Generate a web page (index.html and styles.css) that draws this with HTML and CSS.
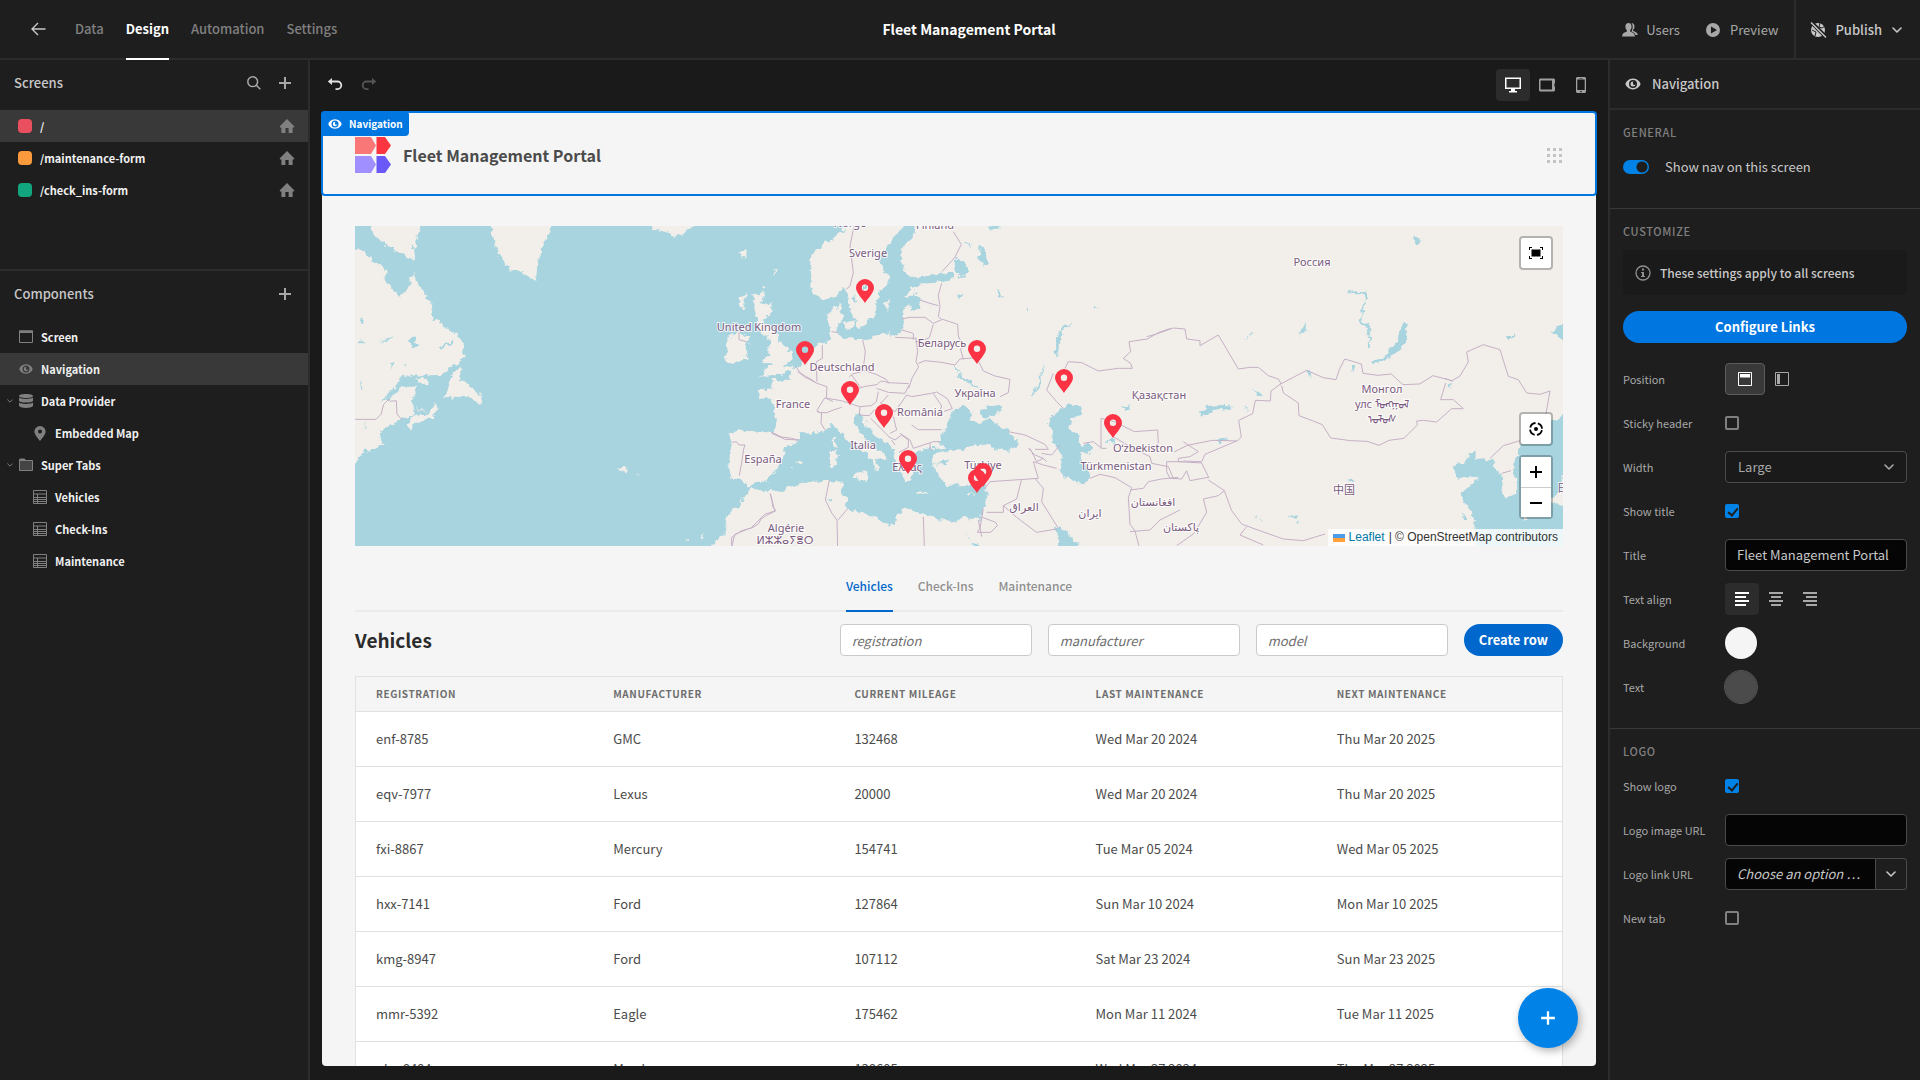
FILE: index.html
```html
<!DOCTYPE html>
<html lang="en">
<head>
<meta charset="utf-8">
<meta name="viewport" content="width=device-width, initial-scale=1">
<title>Fleet Management Portal</title>
<link rel="stylesheet" href="styles.css">
</head>
<body>
<svg class="defs" aria-hidden="true">
  <symbol id="i-plus" viewBox="0 0 14 14"><path d="M6 1h2v5h5v2H8v5H6V8H1V6h5z"/></symbol>
  <symbol id="i-home" viewBox="0 0 16 16"><path d="M8 1 .6 8.600l.6.9H2.400V15h4v-5h3.200v5h4V9.500h1.200l.6-.9z"/></symbol>
  <symbol id="i-eye" viewBox="0 0 16 12"><path fill-rule="evenodd" d="M8 .6C3.800.6.5 4.200.5 6s3.300 5.400 7.500 5.400S15.500 7.800 15.500 6 12.200.6 8 .6zM8 10a4 4 0 1 1 0-8 4 4 0 0 1 0 8zM8 3.500A2.500 2.500 0 1 0 10.500 6 1.300 1.300 0 0 1 8 5.200 1.300 1.300 0 0 1 8.600 3.600z"/></symbol>
  <symbol id="i-chev" viewBox="0 0 10 6"><path d="m1 1 4 4 4-4" fill="none" stroke="currentColor" stroke-width="1.600" stroke-linecap="round" stroke-linejoin="round"/></symbol>
  <symbol id="i-table" viewBox="0 0 14 14"><path d="M.5.5h13v13H.5zM.5 4h13M.5 7.500h13M.5 9.500h13M.5 11.500h13M4.500 4v9.500" fill="none" stroke="currentColor"/></symbol>
  <symbol id="i-undo" viewBox="0 0 16 14"><path d="M5 0v2.600h5.500a4.700 4.700 0 0 1 0 9.400H8.500v-1.800h2a2.900 2.900 0 0 0 0-5.800H5V7L.8 3.500z"/></symbol>
  <symbol id="pin" viewBox="0 0 18 24" overflow="visible"><path fill-rule="evenodd" d="M9 24C7 20.500 0 13.500 0 9a9 9 0 0 1 18 0c0 4.500-7 11.500-9 15zM9 5.500a3.200 3.200 0 1 0 0 6.400 3.200 3.200 0 0 0 0-6.400z"/></symbol>
</svg>

<header class="topbar">
  <nav class="topnav">
    <a class="back" href="#" aria-label="Back"><svg width="15" height="14" viewBox="0 0 15 14"><path d="M14.500 7H1M7 1 1 7l6 6" fill="none" stroke="currentColor" stroke-width="1.400"/></svg></a>
    <a href="#">Data</a>
    <a href="#" class="active">Design</a>
    <a href="#">Automation</a>
    <a href="#">Settings</a>
  </nav>
  <h1 class="app-title">Fleet Management Portal</h1>
  <div class="topactions">
    <button class="act"><svg width="16" height="14" viewBox="0 0 16 14"><path d="M6.500 0C4.500 0 3.400 1.500 3.400 3.600c0 1.500.6 2.900 1.500 3.800v1.200C2.500 9.300.2 10.500 0 13.500h13c-.2-3-2.500-4.200-4.900-4.900V7.400c.9-.9 1.500-2.300 1.500-3.800C9.600 1.500 8.500 0 6.500 0z"/><path d="M9.300.1c2 .1 3.200 1.400 3.200 3.500 0 1.500-.6 2.700-1.400 3.500v1c2.500.6 4.500 2 4.700 3.900l-2.200-.1c-.8-1.700-2.400-2.700-4.200-3.300 1.500-2.500 2-6.500-.1-8.500z"/></svg>Users</button>
    <button class="act"><svg width="14" height="14" viewBox="0 0 14 14"><path fill-rule="evenodd" d="M7 0a7 7 0 1 0 0 14A7 7 0 0 0 7 0zM5 3.500 11 7l-6 3.500z"/></svg>Preview</button>
    <button class="act publish"><svg width="17" height="16" viewBox="0 0 17 16"><path d="M8 1a7 7 0 1 0 0 14A7 7 0 0 0 8 1z"/><path d="m3 3 4 1 1 3M10 1l-1 4 3 1 3-2M5 14l1-4-4-2" fill="none" stroke="#1e1e1e"/><path d="m1 0 15 15" stroke="#1e1e1e" stroke-width="4"/><path d="m1 .5 15 15" stroke="currentColor" stroke-width="1.400"/></svg>Publish<svg class="chev" width="10" height="6"><use href="#i-chev"/></svg></button>
  </div>
</header>

<div class="workspace">
  <aside class="left">
    <section class="screens">
      <div class="panel-head"><h2>Screens</h2>
        <button aria-label="Search"><svg width="14" height="14" viewBox="0 0 14 14"><path d="M5.700.8a4.900 4.900 0 1 1 0 9.800 4.900 4.900 0 0 1 0-9.800zM9.300 9.300l4 4" fill="none" stroke="currentColor" stroke-width="1.500"/></svg></button>
        <button aria-label="Add screen"><svg width="14" height="14"><use href="#i-plus"/></svg></button></div>
      <ul class="tree">
        <li class="selected"><i class="swatch red"></i><a href="#">/</a><svg class="home" width="16" height="16"><use href="#i-home"/></svg></li>
        <li><i class="swatch orange"></i><a href="#">/maintenance-form</a><svg class="home" width="16" height="16"><use href="#i-home"/></svg></li>
        <li><i class="swatch green"></i><a href="#">/check_ins-form</a><svg class="home" width="16" height="16"><use href="#i-home"/></svg></li>
      </ul>
    </section>
    <section class="components">
      <div class="panel-head"><h2>Components</h2>
        <button aria-label="Add component"><svg width="14" height="14"><use href="#i-plus"/></svg></button></div>
      <ul class="tree">
        <li><svg width="14" height="14" viewBox="0 0 14 14"><path d="M.5 1h13v11.500H.5z" fill="none" stroke="currentColor"/><path d="M0 .5h14V3H0z"/></svg><a href="#">Screen</a></li>
        <li class="selected"><svg width="14" height="14"><use href="#i-eye"/></svg><a href="#">Navigation</a></li>
        <li class="open"><svg class="twist" width="6" height="4"><use href="#i-chev"/></svg><svg width="14" height="14" viewBox="0 0 14 14"><path d="M7 0c4 0 7 .8 7 2s-3 2-7 2-7-.8-7-2 3-2 7-2zM0 3.600C1.500 4.700 4 5 7 5s5.500-.3 7-1.400V7c-1 1-4 1.500-7 1.500S1 8 0 7zM0 8.500c1.500 1 4 1.400 7 1.400s5.500-.4 7-1.400V12c-1 1.300-4 2-7 2s-6-.7-7-2z"/></svg><a href="#">Data Provider</a></li>
        <li class="child"><svg width="14" height="15" viewBox="-2 0 18 24" preserveAspectRatio="xMidYMid meet"><use href="#pin" width="18" height="24" x="-2"/></svg><a href="#">Embedded Map</a></li>
        <li class="open"><svg class="twist" width="6" height="4"><use href="#i-chev"/></svg><svg width="14" height="14" viewBox="0 0 14 14"><path d="M.5 2.500h13v10H.5z" fill="#444" stroke="currentColor"/><path d="M0 3V1.500L1 .5h4.500L7.500 3z"/></svg><a href="#">Super Tabs</a></li>
        <li class="child"><svg width="14" height="14"><use href="#i-table"/></svg><a href="#">Vehicles</a></li>
        <li class="child"><svg width="14" height="14"><use href="#i-table"/></svg><a href="#">Check-Ins</a></li>
        <li class="child"><svg width="14" height="14"><use href="#i-table"/></svg><a href="#">Maintenance</a></li>
      </ul>
    </section>
  </aside>

  <main class="center">
    <div class="toolbar">
      <button aria-label="Undo"><svg width="16" height="14"><use href="#i-undo"/></svg></button>
      <button class="redo" aria-label="Redo" disabled><svg width="16" height="14"><use href="#i-undo"/></svg></button>
      <span class="grow"></span>
      <button class="dev on" aria-label="Desktop"><svg width="16" height="16" viewBox="0 0 16 16"><path fill-rule="evenodd" d="M0 .5h16V12h-6v2h2v1.500H4V14h2v-2H0zM1.500 2v8.500h13V2z"/></svg></button>
      <button class="dev" aria-label="Tablet"><svg width="16" height="14" viewBox="0 0 16 14"><path fill-rule="evenodd" d="M1 .5h14l1 1V5.500h-.6v3h.6v4l-1 1H1l-1-1v-11zM1.500 2.500v9h11.500v-9z"/></svg></button>
      <button class="dev" aria-label="Phone"><svg width="10" height="16" viewBox="0 0 10 16"><path fill-rule="evenodd" d="M1 0h8l1 1v14l-1 1H1l-1-1V1zM1.300 2.500v10.500h7.400V2.500zM3.500 1v.6h3V1zM4.300 14v1.200h1.400V14z"/></svg></button>
    </div>

    <div class="preview">
      <header class="site-nav">
        <span class="tag"><svg width="14" height="12"><use href="#i-eye"/></svg>Navigation</span>
        <svg class="logo" width="36" height="36" viewBox="0 0 36 36"><path fill="#f97777" d="M0 0h16l5 8.500-5 8.500H0z"/><path fill="#fb3640" d="M21.500 0H30l6 8.500-6 8.500h-8.500z"/><path fill="#9f8fff" d="M0 19h16l5 8.500-5 8.500H0z"/><path fill="#6a59f6" d="M21.500 19H30l6 8.500-6 8.500h-8.500z"/></svg>
        <span class="site-title">Fleet Management Portal</span>
        <svg class="dots" width="15" height="15" viewBox="0 0 15 15"><path d="M0 0h3v3H0zM6 0h3v3H6zM12 0h3v3h-3zM0 6h3v3H0zM6 6h3v3H6zM12 6h3v3h-3zM0 12h3v3H0zM6 12h3v3H6zM12 12h3v3h-3z"/></svg>
      </header>

      <div class="site-body">
        <div class="map">
          <svg class="map-art" viewBox="0 0 1208 320" preserveAspectRatio="xMidYMid slice">
            <filter id="coast" x="0" y="0" width="100%" height="100%"><feTurbulence type="fractalNoise" baseFrequency=".16" numOctaves="3" seed="4"/><feDisplacementMap in="SourceGraphic" scale="8" xChannelSelector="R" yChannelSelector="G"/></filter>
            <g filter="url(#coast)">
            <path d="M-40-40h1300v400H-40z" fill="#a7d4df"/>
            <!-- Atlantic coast of North America, Greenland and the islands -->
            <g class="land" transform="translate(-15 -11) scale(.33333)">
              <path d="M0 100 45 105 68 102 100 140 135 155 138 205 178 245 205 220 222 170 235 210 270 260 280 310 345 355 372 390 373 425 345 450 300 480 190 482 165 515 120 565 150 545 190 515 228 515 222 545 210 560 225 600 180 615 125 645 120 675 130 690 65 712 50 745 0 800z"/>
              <path d="M85-20h145l5 70-10 50-10-10 5 50-25-25-25-5-50-35-30-30z"/>
              <path d="M435-20h205l-8 70-25 45-15 50-3 48-15 1-25-20-40-10-30-40-20-60z"/>
              <path d="m370 447-30 30-25 68 50 5 25-5 30 25 5-25-20-20-30-25-20-5zM225 490l20 0 28 20-20 0zM222 570l20 20 20-2-30-2zM198 628l20-22 50-12 20-30 5 20-25 25-40 15-20 25z"/>
              <path d="M935 30h130l-35 25-25 12-25-17-45-5zM1200 108l18 0-6 28zM1300 165l10 0-8 25zM1270 215l8 0-5 18zM1202 245l18-5-10 40-12-8zM835 760l25-2-2 8-20 2zM885 775l12 3-10 2zM1040 968l8 6-8 4zM1085 960l10-5-7 20zM1018 965l6 8z"/>
              <path d="M1240 235h35l-15 30h35l-5 35-25 20 20 8 25 30 20 40 30 12-5 25-25 20h25l5 12-30 8-50 8-20 2 20-25 20-12-30-5 0-10 15-15 0-20 12-20-30-18-10-20-10-35z"/>
              <path d="m1155 375 45-25 30 18-10 30 3 30-55 18-15-20 10-20-8-15z"/>
              <path d="m1370 740 15-6 0 10zM1350 750h5v5h-5z"/>
            </g>
            <g class="water" transform="translate(-15 -11) scale(.33333)">
              <path d="m210 375 15-15 5 25 12 10-25 2zM160 370l-45 10 40-18zM300 395l40-20-10 15-30 12zM60 310l20 8-15 4zM60 480l8 45-6-10zM150 440l10 5-5 15zM60 370l15 12-15 0zM195 440l8 10-5 4zM75 615l3 30-4-10z"/>
            </g>
            <!-- Europe, Africa and Asia -->
            <g class="land" transform="translate(345 -11) scale(.33333)">
              <path d="M440-20 430 50 370 85 335 115 330 150 336 190 332 225 350 246 376 256 410 245 432 215 442 235 447 280 466 315 472 340 490 332 500 315 527 305 530 270 535 235 566 205 570 185 548 168 540 145 545 115 565 95 590 60 615 30 620-20z"/>
              <path d="M660-20 640 70 610 98 604 140 615 170 640 190 680 183 720 175 755 168 765 190 725 200 690 205 650 210 645 235 667 255 660 285 640 285 625 265 608 290 607 350 590 365 565 355 520 365 495 375 470 375 440 366 420 370 412 350 414 335 432 305 418 290 426 265 392 283 383 310 390 345 397 375 370 385 340 392 330 410 315 440 290 457 274 465 272 490 245 500 218 492 218 520 167 525 180 545 210 552 225 580 228 630 222 655 180 650 120 645 90 655 95 690 85 750 95 795 120 790 147 818 165 805 200 800 225 765 245 735 255 700 300 675 300 655 335 655 370 650 395 630 412 640 430 665 455 690 490 710 518 735 525 770 537 760 530 740 545 728 560 735 555 715 525 700 500 675 475 650 458 605 480 595 492 612 500 635 530 665 560 685 582 705 580 740 600 770 620 800 637 790 640 770 632 750 645 742 640 725 655 708 695 702 735 700 762 705 705 718 700 750 720 790 750 812 800 810 830 800 850 802 862 830 855 870 840 915 800 905 750 920 700 905 640 888 615 880 590 900 585 930 550 925 510 900 440 880 444 850 420 835 430 800 370 798 300 805 230 830 150 822 120 870 80 910 70 960-20 1040H2900V-20z"/>
              <path d="m460 775 45-5-2 30-45-15zM390 705l20 0 0 45-20 5zM398 665l8-2 2 35-10-2zM650 828l45 5-45 4zM800 838l25-4-22 12zM430 325l35-10-8 30-20-2zM555 265l15-10-10 35zM630 215l20 0-10 30-22 0zM285 742l20-8-3 10z"/>
            </g>
            <!-- Inland seas, gulfs and lakes -->
            <g class="water" transform="translate(345 -11) scale(.33333)">
              <path d="M765 585 790 572 820 597 808 612 840 627 870 612 900 635 930 655 957 680 948 702 900 706 850 688 800 695 770 708 735 703 718 680 735 640 750 605zM840 592l25-18 40-5 2 15-30 18-25 8z"/>
              <path d="M1085 578 1110 566 1152 575 1148 602 1115 610 1108 640 1135 665 1142 690 1165 685 1178 700 1165 718 1140 710 1145 740 1168 765 1168 800 1130 802 1090 785 1080 760 1090 725 1060 680 1056 650 1043 625 1065 595z"/>
              <path d="M1068 935 1100 945 1120 975 1150 1000 1078 1000zM795 945 820 985 850 1000H825zM765 130l25 10 15 15-5 25-22 3-15-20zM840 90l10 5 15 50-10 8-20-25zM865 30h30v14h-20zM885 215l25 28-8 5zM775 238l12 4-6 8zM700 745l50-12-15 12zM1220 680l25-12-5 20zM795 75l18 15-4 6z"/>
              <path d="m1120 325-35 25-10 60 0 10-12-5 12-65 25-20zM1035 440l-15 65-20 40-5 0 20-45zM770 440l-5 30 50 30 25 20-5 0-60-35zM980 270l6 22-5-2zM1185 270l10 15-12-8zM1265 580l25-8-10 12zM380 850l20 5-5 10zM510 200l-8 20-12-2zM470 235l-6 28-4-8z"/>
            </g>
            <g class="water" transform="translate(765 -11) scale(.33333)">
              <path d="m850 322 13 0-3 45-15 35-50 35-40 10-3-6 45-20 35-45zM240 590l20-18 60-2 20 10-60 8-30 20zM290 675l30-8 5 8-25 6zM562 472h12v15h-12zM695 450h12l-8 22zM405 525l30 18-20 0zM378 575l8 15-10-4zM985 515l15-8-10 15zM1293 352 1330 320h80v60h-80zM880 60l25 18-15 15-8-15zM1160 360l25 0-20 14zM685 795l20-5 0 10-15 2z"/>
              <path d="M675 235l30-10 35 5 0 25-8 0-5-20-30 0zM735 255l0 30-15 25 25 15 8 70-6-2-8-60-22-18 12-35zM560 320l0 30-20 0 5 30-6-30 10-12zM403 350l-30 28 20-25zM5 575l30 3-20 8zM400 905l40 15-30-8zM500 905l35-8-10 12zM530 920l10 8-10 2zM1030 890l10 28-8 0z"/>
              <path d="M993 755 1035 742 1050 712 1068 710 1065 735 1110 732 1125 740 1130 770 1145 785 1140 825 1155 850 1192 835 1190 800 1180 760 1200 690 1270 640 1340 590 1500 560V1050H1075L1060 900 1035 860 1022 835 1060 805 1075 792 1040 785 1015 795 1008 775z"/>
            </g>
            <g class="land" transform="translate(765 -11) scale(.33333)"><path d="M1295 855 1325 820 1325 780 1380 780V870L1300 868zM1215 880l15 0 0 25-15 10-10-20z"/></g>
            </g>
            <g class="borders">
              <path transform="translate(-15 -11) scale(.33333)" d="M40 613h68l15-15 8-30 15-15 5 6 18-2 2 40 15 18M1197 350v24l22 6M1368 455l12 18 15 10 15 8 15 10M1295 652l30 14 30 4 20 6M1175 682l14-2 8 10 18 0-4 12-5 35-8 45M1290 835l6 22 2 18 10 12-30 15-15 10-8 15-20 12-30 8-30 20v40"/>
              <g transform="translate(345 -11) scale(.33333)">
                <path d="M462 33l-12 60 10 80-10 40-12 10M760 50l24 38-20 40-38 42M725 205l-10 35 5 35-5 30 10 8M660 255l30 10 25 7M605 312l25-5 45 0 25 18 28-12M605 345l35 10 0 20M585 367l65 3M648 370l5 40-5 30 8 15-20 35-10 30M700 328l-12 40-18 8-25 5M728 313l45 15 2 35 12 25-5 15 8 30M655 445l20-8 50 5 40 8 15-18 50-4 20 40 35 15 45 10-5 40-25 12M488 375l8 35-5 40 10 15M395 350l20 3M367 390l0 40-18 10 2 60M293 470l20 15 38 20 30 10-2 35 20 10M498 468l30 10 30 15 8 10 60 3M448 485l10-8 38-10M476 520l20-6 35-5 10-10 15 0 10 6M480 515l-25-35M530 520l35 12 50 3 12-25M535 530l-6 30-15 12-35 3-55-18-50-8-22 35 5 10M565 540l-20 22M350 588l10 5 20 0 20-8 25-8M365 590l-2 35 12 20M480 575l-2 25 30 2 15-18M540 562l45 28M585 590l35-50 15 5 60-10 15-4 32 20 15 30-25 8M700 535l25 38-10 30M635 630l20 14 70 0M512 610l55 55M580 605l10 40-20 10M565 665l20 10 20-15 20 15 0 22-28 15M600 655l30 20 10 25 60-20 20 0M690 685v20M575 675l10 15M925 650l50 10 60 28 10 15-40 0M985 700l20 20 25 10 10 10M1000 740l30 10 40 10M990 700l20 40 20-10M1000 740l15 50-145 10-15 20M965 792l-15 60-40 20 0 20-50 0M910 872l40 35 60 45 60-10M1005 790l25 30-5 40 50 80M850 880l-10 60-8 12 40 0 20-20-5-10-40-15M1080 690l-25 30-30-5M215 655l40 18 42 2M212 838l12 50-30 10-40 40-50 20-8 35M388 795l-12 60 20 40 15 20 2 85M444 880l-30 35M670 905l3 90M835 915l10 50M1095 460l10-20 40 3 50 25 60-8 42 0-5-15-22-15 22-20-5-30 55-8 35-20 35-12M1090 580l-20-20-30-35 20-50M1203 700v-90l40 10 60 30 70-5 2 40-25 25M1150 685l30-5 25 20 15 0M1240 665l50 30 60 30 5 20 50 10 15 35M1170 790l30-12 45 10 50 30-10 30 5 80 15 20 12 45M1290 825l40-5 15-20 40-8 50-5M1290 950l60-5 30-30 60-30"/>
              </g>
              <path transform="translate(765 -11) scale(.33333)" d="M80 365l30-8 50-18 35 3 5 30 40 5 0 15 55-32 60 102 35-5 25 0 30 25 30 10 8 14-30 22-2 30-45-2-8 40-42 20 8 50-12 12-75-2-75 15-40 20M480 508l80-42 50 22 38 6 10-30 16-32 50 15 5 28 45 6 40-4 35 32 50-2 40-25 60 16M485 512l5 22 45 30 2 38 40 15 30 12 25 40 60 8 50 2 35 12 30-15 45-6 40-40-2-12 20-2 40 5 45-40 35 0-30-27-38 0 15-50M975 490l20 8 25-15 25-42-5-30 50-22 50 15 25 80 30 10 25 40 40 4 30-10-12 68M350 678l-95 40-10 22-55-2M190 680l45 30-25 15-35 5 0 10 70 4 22 45M190 740l-50 0 0 30 10 20 35 2 15-25 10 30 55-10M265 795l48 32-18 15-45 10 10 40-30 50-10 15-50 35M313 827l22 60 30 40 40 15 85 30 60 5 65-20M380 935l-20 25 70 30M1110 730l40-38 50-15M1145 775l28-8"/>
            </g>
            <g class="places" text-anchor="middle">
              <text x="495" y="1">Norge</text><text x="580" y="3">Finland</text>
              <text x="513" y="31">Sverige</text><text x="404" y="105">United Kingdom</text><text x="487" y="145">Deutschland</text>
              <text x="438" y="182">France</text><text x="508" y="223">Italia</text><text x="408" y="237">España</text><text x="431" y="306">Algérie</text>
              <text x="430" y="318">ⵍⵣⵣⴰⵢⴻⵔ</text><text x="587" y="121">Беларусь</text><text x="620" y="171">Україна</text><text x="565" y="190">România</text>
              <text x="552" y="245">Ελλάς</text><text x="628" y="243">Türkiye</text><text x="804" y="173">Қазақстан</text><text x="788" y="226">Oʻzbekiston</text>
              <text x="761" y="244">Türkmenistan</text><text x="669" y="285">العراق</text><text x="735" y="291">ایران</text><text x="798" y="280">افغانستان</text>
              <text x="826" y="305">پاکستان</text><text x="957" y="40">Россия</text><text x="1027" y="167">Монгол</text><text x="1027" y="182">улс ᠮᠣᠩᠭᠣᠯ</text><text x="1027" y="197">ᠤᠯᠤᠰ</text>
              <text x="989" y="268">中国</text><text x="1213" y="266">日本</text>
            </g>
            <g class="pins">
              <use href="#pin" x="501" y="53" width="18" height="24"/><use href="#pin" x="441" y="115" width="18" height="24"/>
              <use href="#pin" x="613" y="114" width="18" height="24"/><use href="#pin" x="700" y="143" width="18" height="24"/>
              <use href="#pin" x="749" y="188" width="18" height="24"/><use href="#pin" x="486" y="155" width="18" height="24"/>
              <use href="#pin" x="520" y="178" width="18" height="24"/><use href="#pin" x="544" y="224" width="18" height="24"/>
              <use href="#pin" x="619" y="237" width="18" height="24"/><use href="#pin" x="613" y="243" width="18" height="24"/>
            </g>
          </svg>
          <div class="map-controls">
            <button class="ctl solo" aria-label="Full screen"><svg width="14" height="12" viewBox="0 0 14 12"><path d="M2.500 2.500h9v7h-9zM0 0h3v1H1v2H0zM14 0h-3v1h2v2h1zM0 12h3v-1H1V9H0zM14 12h-3v-1h2V9h1z"/></svg></button>
            <span class="grow"></span>
            <button class="ctl solo" aria-label="Locate"><svg width="14" height="14" viewBox="0 0 14 14"><circle cx="7" cy="7" r="6" fill="none" stroke="#000" stroke-width="1.800" stroke-dasharray="7 2.425" stroke-dashoffset="-1.200"/><circle cx="7" cy="7" r="2"/></svg></button>
            <div class="zoom"><button class="ctl" aria-label="Zoom in"><svg width="12" height="12" viewBox="0 0 12 12"><path d="M5 0h2v5h5v2H7v5H5V7H0V5h5z"/></svg></button><button class="ctl" aria-label="Zoom out"><svg width="12" height="12" viewBox="0 0 12 12"><path d="M0 5h12v2H0z"/></svg></button></div>
          </div>
          <div class="credit"><svg width="12" height="8"><path fill="#4c9be8" d="M0 0h12v4H0z"/><path fill="#ffa03a" d="M0 4h12v4H0z"/></svg> <a href="#">Leaflet</a> | © OpenStreetMap contributors</div>
        </div>

        <nav class="tabs"><a href="#" class="active">Vehicles</a><a href="#">Check-Ins</a><a href="#">Maintenance</a></nav>

        <div class="filters">
          <h2>Vehicles</h2>
          <input type="text" placeholder="registration" aria-label="registration">
          <input type="text" placeholder="manufacturer" aria-label="manufacturer">
          <input type="text" placeholder="model" aria-label="model">
          <button class="create">Create row</button>
        </div>

        <table class="grid">
          <thead><tr><th>Registration</th><th>Manufacturer</th><th>Current mileage</th><th>Last maintenance</th><th>Next maintenance</th></tr></thead>
          <tbody>
            <tr><td>enf-8785</td><td>GMC</td><td>132468</td><td>Wed Mar 20 2024</td><td>Thu Mar 20 2025</td></tr>
            <tr><td>eqv-7977</td><td>Lexus</td><td>20000</td><td>Wed Mar 20 2024</td><td>Thu Mar 20 2025</td></tr>
            <tr><td>fxi-8867</td><td>Mercury</td><td>154741</td><td>Tue Mar 05 2024</td><td>Wed Mar 05 2025</td></tr>
            <tr><td>hxx-7141</td><td>Ford</td><td>127864</td><td>Sun Mar 10 2024</td><td>Mon Mar 10 2025</td></tr>
            <tr><td>kmg-8947</td><td>Ford</td><td>107112</td><td>Sat Mar 23 2024</td><td>Sun Mar 23 2025</td></tr>
            <tr><td>mmr-5392</td><td>Eagle</td><td>175462</td><td>Mon Mar 11 2024</td><td>Tue Mar 11 2025</td></tr>
            <tr><td>nhc-8484</td><td>Mazda</td><td>138605</td><td>Wed Mar 27 2024</td><td>Thu Mar 27 2025</td></tr>
          </tbody>
        </table>
      </div>
      <button class="fab" aria-label="Add component"><svg width="16" height="16"><use href="#i-plus"/></svg></button>
    </div>
  </main>

  <aside class="right">
    <div class="right-head"><svg width="16" height="12"><use href="#i-eye"/></svg><h2>Navigation</h2></div>
    <section>
      <h3>General</h3>
      <label class="switch"><input type="checkbox" role="switch" checked>Show nav on this screen</label>
    </section>
    <section>
      <h3>Customize</h3>
      <p class="info"><svg width="16" height="16" viewBox="0 0 16 16"><circle cx="8" cy="8" r="7" fill="none" stroke="currentColor" stroke-width="1.300"/><path d="M7 3.500h2v2H7zM6 7h3v4h1v1H6v-1h1V8H6z"/></svg>These settings apply to all screens</p>
      <button class="cta">Configure Links</button>
      <div class="fields">
        <div class="field"><span>Position</span><div class="group">
          <button class="pos on" aria-label="Top"><svg width="14" height="14" viewBox="0 0 14 14"><path d="M.5.5h13v13H.5z" fill="none" stroke="currentColor"/><path d="M2 2h10v3.500H2z"/></svg></button>
          <button class="tool" aria-label="Left"><svg width="14" height="14" viewBox="0 0 14 14"><path d="M.5.500h13v13H.5z" fill="none" stroke="currentColor"/><path d="M2 2h3v10H2z"/></svg></button></div></div>
        <div class="field"><label for="sticky">Sticky header</label><input type="checkbox" id="sticky"></div>
        <div class="field"><label for="width">Width</label><span class="pick"><select id="width"><option>Large</option></select><svg width="10" height="6"><use href="#i-chev"/></svg></span></div>
        <div class="field"><label for="showtitle">Show title</label><input type="checkbox" id="showtitle" checked></div>
        <div class="field"><label for="title">Title</label><input type="text" id="title" value="Fleet Management Portal"></div>
        <div class="field"><span>Text align</span><div class="group">
          <button class="tool on" aria-label="Align left"><svg width="14" height="14" viewBox="0 0 14 14"><path d="M0 0h14v2H0zM0 4h11v2H0zM0 8h14v2H0zM0 12h11v2H0z"/></svg></button>
          <button class="tool" aria-label="Align center"><svg width="14" height="14" viewBox="0 0 14 14"><path d="M0 0h14v2H0zM2 4h10v2H2zM0 8h14v2H0zM2 12h10v2H2z"/></svg></button>
          <button class="tool" aria-label="Align right"><svg width="14" height="14" viewBox="0 0 14 14"><path d="M0 0h14v2H0zM3 4h11v2H3zM0 8h14v2H0zM3 12h11v2H3z"/></svg></button></div></div>
        <div class="field"><span>Background</span><button class="color light" aria-label="Background color"></button></div>
        <div class="field"><span>Text</span><button class="color dark" aria-label="Text color"></button></div>
      </div>
    </section>
    <section>
      <h3>Logo</h3>
      <div class="fields">
        <div class="field"><label for="showlogo">Show logo</label><input type="checkbox" id="showlogo" checked></div>
        <div class="field"><label for="logourl">Logo image URL</label><input type="text" id="logourl"></div>
        <div class="field"><label for="logolink">Logo link URL</label><div class="combo"><input type="text" id="logolink" placeholder="Choose an option …"><button aria-label="Show options"><svg width="10" height="6"><use href="#i-chev"/></svg></button></div></div>
        <div class="field"><label for="newtab">New tab</label><input type="checkbox" id="newtab"></div>
      </div>
    </section>
  </aside>
</div>
</body>
</html>
```
FILE: styles.css
```css
* { box-sizing: border-box; }
body {
  margin: 0; height: 100vh; display: flex; flex-direction: column; overflow: hidden;
  background: #1a1a1a; color: #c8c8c8;
  font: 13px/20px "Noto Sans CJK SC", "Noto Sans", sans-serif;
}
h1, h2, h3, p, ul { margin: 0; padding: 0; font-weight: 500; list-style: none; }
h2 { font-size: 13px; }
a { color: inherit; text-decoration: none; }
button, input, select { font: inherit; color: inherit; margin: 0; }
button { background: none; border: 0; padding: 0; display: inline-flex; align-items: center; justify-content: center; }
svg { fill: currentColor; flex: none; display: block; }
.defs { position: absolute; width: 0; height: 0; }
.grow { flex: 1; }

.topbar {
  display: grid; grid-template-columns: 1fr auto 1fr; height: 60px; flex: none;
  padding: 0 13px 0 31px; background: #1e1e1e; border-bottom: 2px solid #2c2c2c;
}
.topnav { display: flex; gap: 22px; color: #808080; font-weight: 500; }
.topnav a { display: flex; align-items: center; height: 60px; border-bottom: 2px solid transparent; }
.topnav .back { color: #c8c8c8; margin-right: 7px; }
.topnav .active { color: #fff; border-color: #fff; font-weight: 700; }
.app-title { padding-bottom: 2px; font-size: 14px; font-weight: 700; color: #fff; align-self: center; }
.topactions { display: flex; justify-content: flex-end; }
.act { gap: 8px; margin-right: 26px; color: #a8a8a8; }
.act + .act { margin-right: 16px; gap: 10px; }
.act.publish { gap: 8px; margin: 0; padding: 0 5px 0 14px; border-left: 2px solid #2c2c2c; color: #c8c8c8; font-weight: 500; }
.act + .publish.publish { gap: 8px; margin: 0; }
.publish .chev { margin-left: 2px; }

.workspace { display: flex; flex: 1; min-height: 0; }
.left { width: 310px; flex: none; background: #1e1e1e; border-right: 2px solid #2c2c2c; }
.screens { height: 211px; border-bottom: 2px solid #2c2c2c; }
.panel-head { display: flex; align-items: center; height: 50px; padding: 0 16px 4px 14px; gap: 17px; color: #a8a8a8; }
.panel-head h2 { flex: 1; color: #c8c8c8; }
.tree li { display: flex; align-items: center; height: 32px; padding: 0 13px 0 19px; gap: 8px; color: #808080; font-size: 11px; font-weight: 700; }
.tree a { flex: 1; color: #f0f0f0; }
.tree .selected { background: #393939; }
.tree .open { padding-left: 7px; gap: 8px; }
.tree .open .twist { margin-right: -2px; color: #808080; }
.tree .child { padding-left: 33px; }
.swatch { width: 14px; height: 14px; border-radius: 4px; margin-left: -1px; }
.red { background: #ea4f5f; }
.orange { background: #fb9a3c; }
.green { background: #12a67f; }

.center { flex: 1; min-width: 0; display: flex; flex-direction: column; padding: 0 12px 14px; }
.toolbar { display: flex; align-items: center; height: 52px; flex: none; margin-right: -2px; padding: 0 0 2px 5px; color: #e0e0e0; }
.toolbar .redo { margin-left: 18px; transform: scaleX(-1); color: #555; }
.dev { width: 34px; height: 32px; border-radius: 4px; color: #a0a0a0; }
.dev.on { background: #2c2c2c; color: #fff; }
.preview { position: relative; flex: 1; min-height: 0; background: #f5f5f5; color: #4b4b4b; border-radius: 4px; }
.site-nav { position: relative; display: flex; align-items: center; height: 85px; margin: -1px -1px 0; padding: 3px 33px 0 32px; gap: 12px; border: 2px solid #0076e0; border-radius: 4px; }
.tag { position: absolute; top: -2px; left: -2px; display: flex; align-items: center; gap: 7px; height: 25px; padding: 0 6px 0 7px; border-radius: 4px; border-bottom-left-radius: 0; background: #0076e0; color: #fff; font-size: 10px; font-weight: 700; }
.site-title { flex: 1; font-size: 16px; font-weight: 700; color: #4b4b4b; }
.dots { color: #c4c4c4; }
.site-body { height: calc(100% - 84px); overflow: hidden; padding: 30px 33px 0; }

.map { position: relative; height: 320px; overflow: hidden; }
.map-art { width: 100%; height: 100%; }
.land { fill: #f2efea; }
.water { fill: #a7d4df; }
.borders { fill: none; stroke: #c5b0c6; stroke-width: 3; stroke-linejoin: round; }
.places { font-family: "Noto Sans", "DejaVu Sans", "Noto Sans CJK SC", sans-serif; font-size: 11px; fill: #7a5a80; stroke: #fff; stroke-width: 2; stroke-opacity: .8; paint-order: stroke; }
.pins { fill: #fb3345; }
.map-controls { position: absolute; top: 10px; right: 10px; bottom: 27px; width: 34px; display: flex; flex-direction: column; color: #000; }
.ctl { background: #fff; width: 30px; height: 30px; }
.solo, .zoom { border: 2px solid rgba(0, 0, 0, .25); border-radius: 4px; background-clip: padding-box; flex: none; }
.solo { width: 34px; height: 34px; }
.zoom { margin-top: 9px; }
.zoom .ctl { display: flex; }
.zoom .ctl + .ctl { border-top: 1px solid #ccc; }
.credit { position: absolute; right: 0; bottom: 0; display: flex; align-items: center; gap: 4px; height: 17px; padding: 0 5px; background: rgba(255, 255, 255, .8); color: #333; font: 12px/17px "Liberation Sans", sans-serif; white-space: nowrap; }
.credit a { color: #0078a8; }

.tabs { display: flex; justify-content: center; gap: 25px; height: 66px; border-bottom: 2px solid #eaeaea; color: #909090; font-size: 12px; font-weight: 500; }
.tabs a { height: 66px; padding-top: 30px; border-bottom: 2px solid transparent; }
.tabs .active { color: #0068cc; border-color: #0068cc; }
.filters { display: flex; align-items: center; gap: 16px; margin: 12px 0 20px; }
.filters h2 { flex: 1; font-size: 19px; font-weight: 700; line-height: 32px; color: #2c2c2c; }
.filters input { width: 192px; height: 32px; padding: 0 11px; border: 1px solid #cacaca; border-radius: 4px; background: #fff; }
.filters input::placeholder { color: #6e6e6e; font-style: italic; opacity: 1; }
.create { height: 32px; padding: 0 15px; border-radius: 16px; background: #0068cc; color: #fff; font-weight: 700; }
.grid { width: 100%; table-layout: fixed; border-collapse: separate; border-spacing: 0; border: 1px solid #e1e1e1; background: #fff; }
.grid th, .grid td { text-align: left; padding: 0 16px; border-bottom: 1px solid #e1e1e1; }
.grid th:first-child, .grid td:first-child { padding-left: 20px; }
.grid th { height: 35px; background: #f5f5f5; font-size: 10px; font-weight: 700; letter-spacing: .06em; text-transform: uppercase; color: #6e6e6e; }
.grid td { height: 55px; color: #4b4b4b; }
.fab { position: absolute; right: 18px; bottom: 18px; width: 60px; height: 60px; border-radius: 50%; background: #0082e6; color: #fff; box-shadow: 2px 3px 8px rgba(0, 0, 0, .3); }

.right { width: 312px; flex: none; background: #1e1e1e; border-left: 2px solid #2c2c2c; overflow: hidden; }
.right-head { display: flex; align-items: center; gap: 11px; height: 50px; padding: 0 15px; border-bottom: 2px solid #2c2c2c; }
.right section { padding: 14px 13px 25px; }
.right section + section { border-top: 1px solid #383838; }
.right h3 { margin-bottom: 11px; font-size: 11px; line-height: 16px; font-weight: 500; letter-spacing: .06em; text-transform: uppercase; color: #808080; }
.switch { display: flex; align-items: center; gap: 16px; height: 32px; }
.switch input { appearance: none; width: 26px; height: 14px; border-radius: 7px; background: radial-gradient(circle at 19px 7px, #1e1e1e 5px, #0082e6 6px); }
.info { display: flex; align-items: center; gap: 9px; height: 45px; padding: 0 12px; border-radius: 4px; background: #1a1a1a; font-size: 12px; }
.info svg { color: #909090; }
.cta { width: 100%; height: 32px; margin: 16px 0 20px; border-radius: 16px; background: #0076e0; color: #fff; font-weight: 700; }
.fields { display: grid; gap: 12px; }
.field { display: grid; grid-template-columns: 102px 1fr; align-items: center; height: 32px; }
.field > label, .field > span:first-child { font-size: 11px; color: #a8a8a8; }
.group { display: flex; }
.tool { width: 34px; height: 32px; border-radius: 4px; color: #a8a8a8; }
.tool.on { background: #2c2c2c; color: #fff; }
.pos { width: 40px; height: 32px; border: 1px solid #5c5c5c; border-radius: 4px; background: #393939; color: #fff; }
.field input[type="checkbox"] { appearance: none; width: 14px; height: 14px; border: 2px solid #808080; border-radius: 2px; }
.field input[type="checkbox"]:checked { border: 0; background: #0082e6; position: relative; }
.field input:checked::after { content: ""; position: absolute; left: 5px; top: 2px; width: 4px; height: 8px; border: solid #1e1e1e; border-width: 0 2px 2px 0; transform: rotate(40deg); }
.field input[type="text"], .pick { width: 100%; min-width: 0; height: 32px; border: 1px solid #4b4b4b; border-radius: 4px; }
.field input[type="text"] { padding: 0 11px 1px; background: #050505; }
.field input::placeholder { color: #c8c8c8; font-style: italic; opacity: 1; }
.pick { display: flex; align-items: center; padding-right: 12px; background: #1a1a1a; color: #a8a8a8; }
.pick select { appearance: none; flex: 1; height: 30px; padding: 0 12px; border: 0; background: none; }
.combo { display: flex; }
.combo input[type="text"] { flex: 1; border-radius: 4px 0 0 4px; }
.combo button { width: 31px; height: 32px; flex: none; border: 1px solid #4b4b4b; border-left: 0; border-radius: 0 4px 4px 0; }
.color { width: 32px; height: 32px; border-radius: 50%; }
.light { background: #f5f5f5; }
.dark { background: #4b4b4b; outline: 1px solid #555; }
```
